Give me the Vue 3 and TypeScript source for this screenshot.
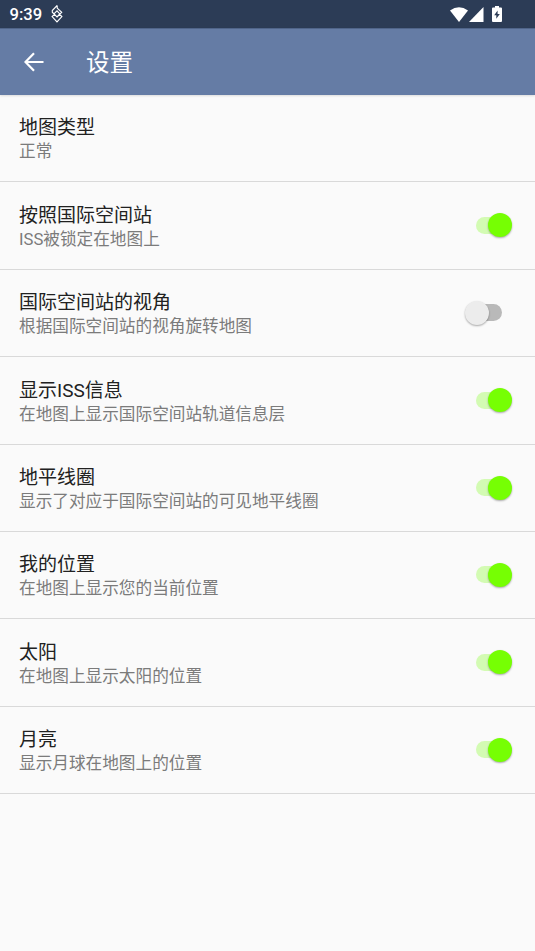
<script setup lang="ts">
import { ref } from 'vue'

interface Setting {
  title: string
  summary: string
  on?: boolean
}

const settings = ref<Setting[]>([
  { title: '地图类型', summary: '正常' },
  { title: '按照国际空间站', summary: 'ISS被锁定在地图上', on: true },
  { title: '国际空间站的视角', summary: '根据国际空间站的视角旋转地图', on: false },
  { title: '显示ISS信息', summary: '在地图上显示国际空间站轨道信息层', on: true },
  { title: '地平线圈', summary: '显示了对应于国际空间站的可见地平线圈', on: true },
  { title: '我的位置', summary: '在地图上显示您的当前位置', on: true },
  { title: '太阳', summary: '在地图上显示太阳的位置', on: true },
  { title: '月亮', summary: '显示月球在地图上的位置', on: true },
])

function toggle(item: Setting) {
  if (item.on !== undefined) item.on = !item.on
}
</script>

<template>
  <div class="screen">
    <div class="status">
      <span class="time">9:39</span>
      <svg class="app-icon" width="12" height="18" viewBox="0 0 12 18" fill="none" stroke="#fff" stroke-width="1.15">
        <path d="M6.200.4 1.300 5.600v1.600L6 12l2.800-3.100L6 5.800 3.200 8.700M6.200.4v2.700l4.500 4.200L6 12M3.400 9.300l-2.300 2.300L6 17l4.900-5.400-2.300-2.300" />
      </svg>
      <span class="spacer"></span>
      <svg class="wifi" width="18" height="15" viewBox="0 0 18 15"><path fill="#fff" d="M0 3.500Q9-3 18 3.500L9 15z" /></svg>
      <svg class="signal" width="15" height="15" viewBox="0 0 15 15"><path fill="#fff" d="M14.500 0v15H0z" /></svg>
      <svg class="battery" width="10" height="16" viewBox="0 0 10 16"><path fill="#fff" fill-rule="evenodd" d="M3 0h4v1.500h2q1 0 1 1V15q0 1-1 1H1q-1 0-1-1V2.500q0-1 1-1h2zM5.600 4.500 2.200 9.200h2.100v3.600L7.800 8H5.600z" /></svg>
    </div>
    <header class="bar">
      <svg class="back" width="20" height="20" viewBox="0 0 20 20"><path d="M19.500 10H1.800M10 1.200 1.500 10l8.500 8.800" fill="none" stroke="#fff" stroke-width="2.200" /></svg>
      <h1>设置</h1>
    </header>
    <main>
      <div v-for="item in settings" :key="item.title" class="row" @click="toggle(item)">
        <div class="text">
          <div class="title">{{ item.title }}</div>
          <div class="summary">{{ item.summary }}</div>
        </div>
        <div v-if="item.on !== undefined" class="switch" :class="{ on: item.on }"><span class="thumb"></span></div>
      </div>
    </main>
  </div>
</template>

<style>
body { background: #fafafa; }
</style>

<style scoped>
.screen { height: 951px; overflow: hidden; background: #fafafa; font-family: Roboto, "Noto Sans CJK SC", sans-serif; }
.status { height: 28px; box-sizing: border-box; display: flex; align-items: center; background: #2c3c56; padding: 0 33px 0 9.500px; color: #fff; }
.time { font-size: 16.600px; line-height: 28px; font-weight: 500; padding-top: 2px; }
.app-icon { margin-left: 9px; }
.spacer { flex: 1; }
.signal { margin-left: 1.500px; }
.battery { margin-left: 8px; }
.bar { height: 67px; box-sizing: border-box; display: flex; align-items: center; padding-left: 23.500px; border-top: 1px solid #50658a; background: #657ca5; color: #fff; box-shadow: 0 1px 2px #0000001f; }
.back { margin-bottom: 1px; }
h1 { margin: 1px 0 0 42.500px; font-size: 23.500px; font-weight: 400; line-height: 36px; }
.row { height: 87.400px; box-sizing: border-box; border-bottom: 1px solid #d9d9d9; display: flex; align-items: center; justify-content: space-between; padding: 0 19px; }
.text { padding-top: 2.400px; }
.title { font-size: 19px; line-height: 25px; color: #212121; }
.summary { font-size: 16.650px; line-height: 23px; color: #7b7b7b; }
.switch { width: 26px; height: 17px; border-radius: 8.500px; background: #b9b9b9; display: flex; align-items: center; margin: 0 14px 0.400px 0; }
.thumb { width: 24px; height: 24px; flex: none; border-radius: 50%; background: #ececec; margin-left: -11px; box-shadow: 0 1px 2px #0005; }
.switch.on { background: #d3fbb3; }
.switch.on .thumb { background: #76ff03; margin-left: 12px; }
</style>
